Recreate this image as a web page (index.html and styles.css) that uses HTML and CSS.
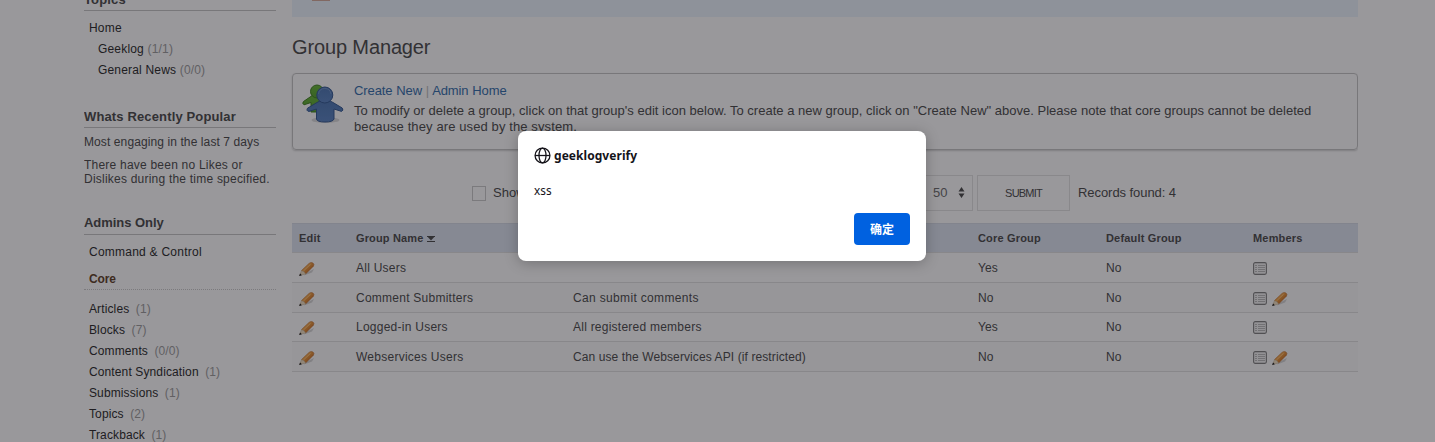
FILE: index.html
```html
<!DOCTYPE html>
<html lang="en">
<head>
<meta charset="utf-8">
<title>Group Manager</title>
<link rel="stylesheet" href="styles.css">
</head>
<body>
<svg class="defs" aria-hidden="true">
  <defs>
    <linearGradient id="wood" x1="0" y1="0" x2="1" y2="1"><stop offset="0.3" stop-color="#ffb04a"/><stop offset="0.7" stop-color="#cc6c1a"/></linearGradient>
    <linearGradient id="green" x1="0" y1="0" x2="0" y2="1"><stop offset="0" stop-color="#62b530"/><stop offset="1" stop-color="#4f9f26"/></linearGradient>
    <linearGradient id="blue" x1="0" y1="0" x2="0" y2="1"><stop offset="0" stop-color="#4672b0"/><stop offset="1" stop-color="#537fc0"/></linearGradient>
    <symbol id="pencil" viewBox="0 0 16 16">
      <path d="M5 14.500 13 11.500 15 8 7 12Z" fill="#999" opacity=".4"/>
      <path d="M2.500 9.600 10.200 2.300Q12 .9 14 2 15.700 3.400 14.400 5.200L6.600 13Z" fill="url(#wood)" stroke="#b8692a" stroke-width=".6"/>
      <path d="M4.400 10 11.600 3.300" stroke="#ffc777" stroke-width=".9"/>
      <path d="M2.500 9.600.6 14.500 6.600 13Q5.800 10.500 2.500 9.600Z" fill="#f0dfc0" stroke="#b79f7c" stroke-width=".4"/>
      <path d="M1.100 12.600.1 15 2.900 14.200Z" fill="#111"/>
    </symbol>
    <symbol id="list" viewBox="0 0 14 13">
      <rect x=".6" y=".6" width="12.800" height="11.800" rx="1.600" fill="#f2f2f2" stroke="#7c7c7c" stroke-width="1.100"/>
      <path d="M2 3.500H12M2 5.500H12M2 7.500H12M2 9.500H12" stroke="#b9b9b9"/>
      <path d="M4.500 2V11" stroke="#f2f2f2"/>
    </symbol>
  </defs>
</svg>

<div class="page">
  <aside class="sidebar">
    <section class="block topics">
      <h3>Topics</h3>
      <ul class="menu">
        <li>Home</li>
        <li class="sub">Geeklog <span>(1/1)</span></li>
        <li class="sub">General News <span>(0/0)</span></li>
      </ul>
    </section>
    <section class="block popular">
      <h3>Whats Recently Popular</h3>
      <p>Most engaging in the last 7 days</p>
      <p>There have been no Likes or<br>Dislikes during the time specified.</p>
    </section>
    <section class="block admins">
      <h3>Admins Only</h3>
      <ul class="menu">
        <li>Command &amp; Control</li>
      </ul>
      <h4>Core</h4>
      <ul class="menu core">
        <li>Articles <span>(1)</span></li>
        <li>Blocks <span>(7)</span></li>
        <li>Comments <span>(0/0)</span></li>
        <li>Content Syndication <span>(1)</span></li>
        <li>Submissions <span>(1)</span></li>
        <li>Topics <span>(2)</span></li>
        <li>Trackback <span>(1)</span></li>
      </ul>
    </section>
  </aside>

  <main class="content">
    <div class="notice"><i></i></div>
    <h2>Group Manager</h2>
    <div class="panel">
      <svg class="people" viewBox="0 0 42 42">
        <ellipse cx="23.500" cy="37" rx="14" ry="3" fill="#888" opacity=".3"/>
        <g fill="url(#green)" stroke="#397d18" stroke-width="1">
          <path d="M11 12 1.500 18.500Q-.2 20.500 2 21.800L9 19.500V29H22V12Z"/>
          <circle cx="15" cy="8.500" r="6.500"/>
        </g>
        <g fill="url(#blue)" stroke="#2c538f" stroke-width="1">
          <path d="M15 19.500Q18 17 23 17T31 19.500L40.200 25Q42 27.500 39.500 28.400L32 26V36Q31 39 23 39T14.500 36V26L7 28.400Q4 28 5.500 25.200Z"/>
          <circle cx="22.800" cy="12" r="8"/>
        </g>
        <path d="M16.500 11Q17 5.700 22.800 5.400 28.300 5.700 29 11" fill="none" stroke="#7297cb" stroke-width=".8"/>
      </svg>
      <div class="panel-text">
        <div class="links"><a>Create New</a> <i>|</i> <a>Admin Home</a></div>
        <p class="l1">To modify or delete a group, click on that group's edit icon below. To create a new group, click on "Create New" above. Please note that core groups cannot be deleted</p>
        <p class="l2">because they are used by the system.</p>
      </div>
    </div>

    <div class="filter">
      <span class="check"></span>
      <span class="show">Show</span>
      <span class="select">50
        <svg viewBox="0 0 7 11"><path d="M3.500 0 6.500 4.500H.5ZM3.500 11 6.500 6.500H.5Z" fill="#444"/></svg>
      </span>
      <span class="submit">SUBMIT</span>
      <span class="records">Records found: 4</span>
    </div>

    <div class="table">
      <div class="row head"><span>Edit</span><span>Group Name <svg class="sort" viewBox="0 0 8 6"><path d="M0 .5H8M0 5.500H8" stroke="#444"/><path d="M.8 1H7.200L4 4.500Z" fill="#444"/></svg></span><span></span><span>Core Group</span><span>Default Group</span><span>Members</span></div>
      <div class="row"><span><svg class="pen"><use href="#pencil"/></svg></span><span>All Users</span><span></span><span>Yes</span><span>No</span><span><svg class="lst"><use href="#list"/></svg></span></div>
      <div class="row alt"><span><svg class="pen"><use href="#pencil"/></svg></span><span>Comment Submitters</span><span>Can submit comments</span><span>No</span><span>No</span><span><svg class="lst"><use href="#list"/></svg><svg class="pen"><use href="#pencil"/></svg></span></div>
      <div class="row short"><span><svg class="pen"><use href="#pencil"/></svg></span><span>Logged-in Users</span><span>All registered members</span><span>Yes</span><span>No</span><span><svg class="lst"><use href="#list"/></svg></span></div>
      <div class="row alt last"><span><svg class="pen"><use href="#pencil"/></svg></span><span>Webservices Users</span><span>Can use the Webservices API (if restricted)</span><span>No</span><span>No</span><span><svg class="lst"><use href="#list"/></svg><svg class="pen"><use href="#pencil"/></svg></span></div>
    </div>
  </main>
</div>

<div class="overlay">
  <div class="dialog">
    <div class="title">
      <svg viewBox="0 0 16 16" fill="none" stroke="#15141a" stroke-width="1.200"><circle cx="8" cy="8" r="7"/><ellipse cx="8" cy="8" rx="3.300" ry="7"/><path d="M1 8H15"/></svg>
      <b>geeklogverify</b>
    </div>
    <div class="message">xss</div>
    <button class="ok">确定</button>
  </div>
</div>
</body>
</html>
```
FILE: styles.css
```css
* { box-sizing: border-box; }
body { margin: 0; height: 442px; overflow: hidden; background: #fff; color: #444; font: 13px/16px "Liberation Sans", Arial, sans-serif; }
h2, h3, h4, p, ul { margin: 0; padding: 0; }
ul { list-style: none; }
i { font-style: normal; }
.defs { position: absolute; width: 0; height: 0; }

.page { display: flex; gap: 16px; width: 1274px; height: 442px; margin-left: 84px; overflow: hidden; }

.sidebar { width: 192px; flex: none; font-size: 12px; letter-spacing: .1px; }
.block h3 { height: 21px; border-bottom: 1px solid #c4c4c4; font-size: 13px; line-height: 20px; letter-spacing: .14px; color: #444; }
.topics { margin-top: -10px; }
.menu { padding: 7px 0 0 5px; }
.menu li { line-height: 21px; color: #222; letter-spacing: .18px; white-space: pre; }
.menu .sub { padding-left: 9px; }
.menu span { color: #999; }
.core span { margin-left: 3px; }
.popular { margin-top: 26px; }
.popular p { line-height: 14px; padding-top: 7px; }
.popular p + p { padding-top: 9px; letter-spacing: .22px; }
.popular p:last-child { font-size: 12px; }
.admins { margin-top: 27px; }
.block.admins h3 { height: 22px; letter-spacing: -.04px; }
.admins .menu:not(.core) li { letter-spacing: .24px; }
.admins h4 { height: 21px; margin-top: 6px; padding-left: 5px; border-bottom: 1px dotted #c8c8c8; font-size: 12px; line-height: 20px; letter-spacing: -.1px; color: #5a3a1c; }
.admins .menu.core { padding-top: 9px; }
.admins .core li { letter-spacing: .12px; }

.content { width: 1066px; flex: none; }
.notice { height: 17px; padding-left: 20px; background: #ebf4fd; }
.notice i { display: block; width: 18px; height: 1px; background: #d4a898; }
h2 { margin-top: 17px; font-size: 20px; line-height: 26px; font-weight: 400; letter-spacing: -.13px; }
.panel { display: flex; gap: 10px; height: 77px; margin-top: 13px; padding: 9px; border: 1px solid #c4c4c4; border-radius: 4px; box-shadow: 0 1px 2px rgba(0,0,0,.2); }
.people { width: 42px; height: 42px; }
.panel-text p { white-space: nowrap; }
.links { height: 20px; line-height: 16px; letter-spacing: -.1px; word-spacing: .3px; }
.links a { color: #2d69a8; }
.links i { color: #bbb; }
.l1 { letter-spacing: .012px; }
.l2 { letter-spacing: .11px; }

.filter { display: flex; align-items: center; height: 36px; margin-top: 25px; padding-left: 180px; }
.check { width: 14px; height: 15px; border: 1px solid #c8c8c8; }
.show { width: 150px; margin-left: 7px; }
.select { display: flex; align-items: center; justify-content: space-between; width: 88px; height: 36px; margin-left: 242px; padding: 0 7px 0 47px; border: 1px solid #e2e2e2; color: #666; }
.select svg { width: 7px; height: 11px; margin-top: -2px; }
.submit { width: 93px; height: 36px; margin-left: 4px; border: 1px solid #e2e2e2; font-size: 11px; line-height: 35px; letter-spacing: -.8px; text-align: center; }
.records { margin-left: 8px; letter-spacing: -.06px; }

.table { margin-top: 12px; font-size: 12px; letter-spacing: .09px; }
.row { display: grid; grid-template-columns: 57px 217px 405px 128px 147px 112px; height: 30px; border-bottom: 1px solid #e0e0e0; line-height: 31px; }
.row > span { height: 29px; padding-left: 7px; white-space: nowrap; }
.row > span:nth-child(2) { letter-spacing: .25px; }
.row > span:nth-child(3) { letter-spacing: .24px; }
.row.alt > span:nth-child(3) { letter-spacing: .34px; }
.row.last > span:nth-child(3) { letter-spacing: .1px; }
.row.head { border-top: 1px solid #d5dae6; background: #dde3f0; font-size: 11px; font-weight: 700; line-height: 29px; letter-spacing: .18px; }
.row.head > span:nth-child(2) { letter-spacing: .14px; }
.alt { background: #fbfbfb; }
.row.short { height: 29px; line-height: 29px; }
.row svg { vertical-align: middle; }
.pen { width: 16px; height: 16px; }
.lst { width: 14px; height: 13px; }
.lst + .pen { margin-left: 5px; }
.row .sort { width: 8px; height: 6px; vertical-align: 0; }

.overlay { position: absolute; inset: 0; background: rgba(28,27,34,.45); }
.dialog { position: absolute; left: 518px; top: 131px; display: flex; flex-direction: column; width: 408px; height: 130px; padding: 16px; border-radius: 8px; background: #fff; box-shadow: 0 2px 14px rgba(0,0,0,.25); color: #15141a; font: 12px/18px "Noto Sans", "Noto Sans CJK SC", sans-serif; }
.title { display: flex; align-items: center; gap: 3px; height: 18px; letter-spacing: .05px; }
.title svg { width: 17px; height: 17px; margin-top: -1px; }
.message { height: 18px; margin-top: 16px; font-size: 11.800px; }
.ok { align-self: flex-end; width: 56px; height: 32px; margin-top: 14px; padding: 0; border: 0; border-radius: 4px; background: #0061e0; color: #fff; font: 700 12px/32px "Noto Sans CJK SC", sans-serif; }
```
